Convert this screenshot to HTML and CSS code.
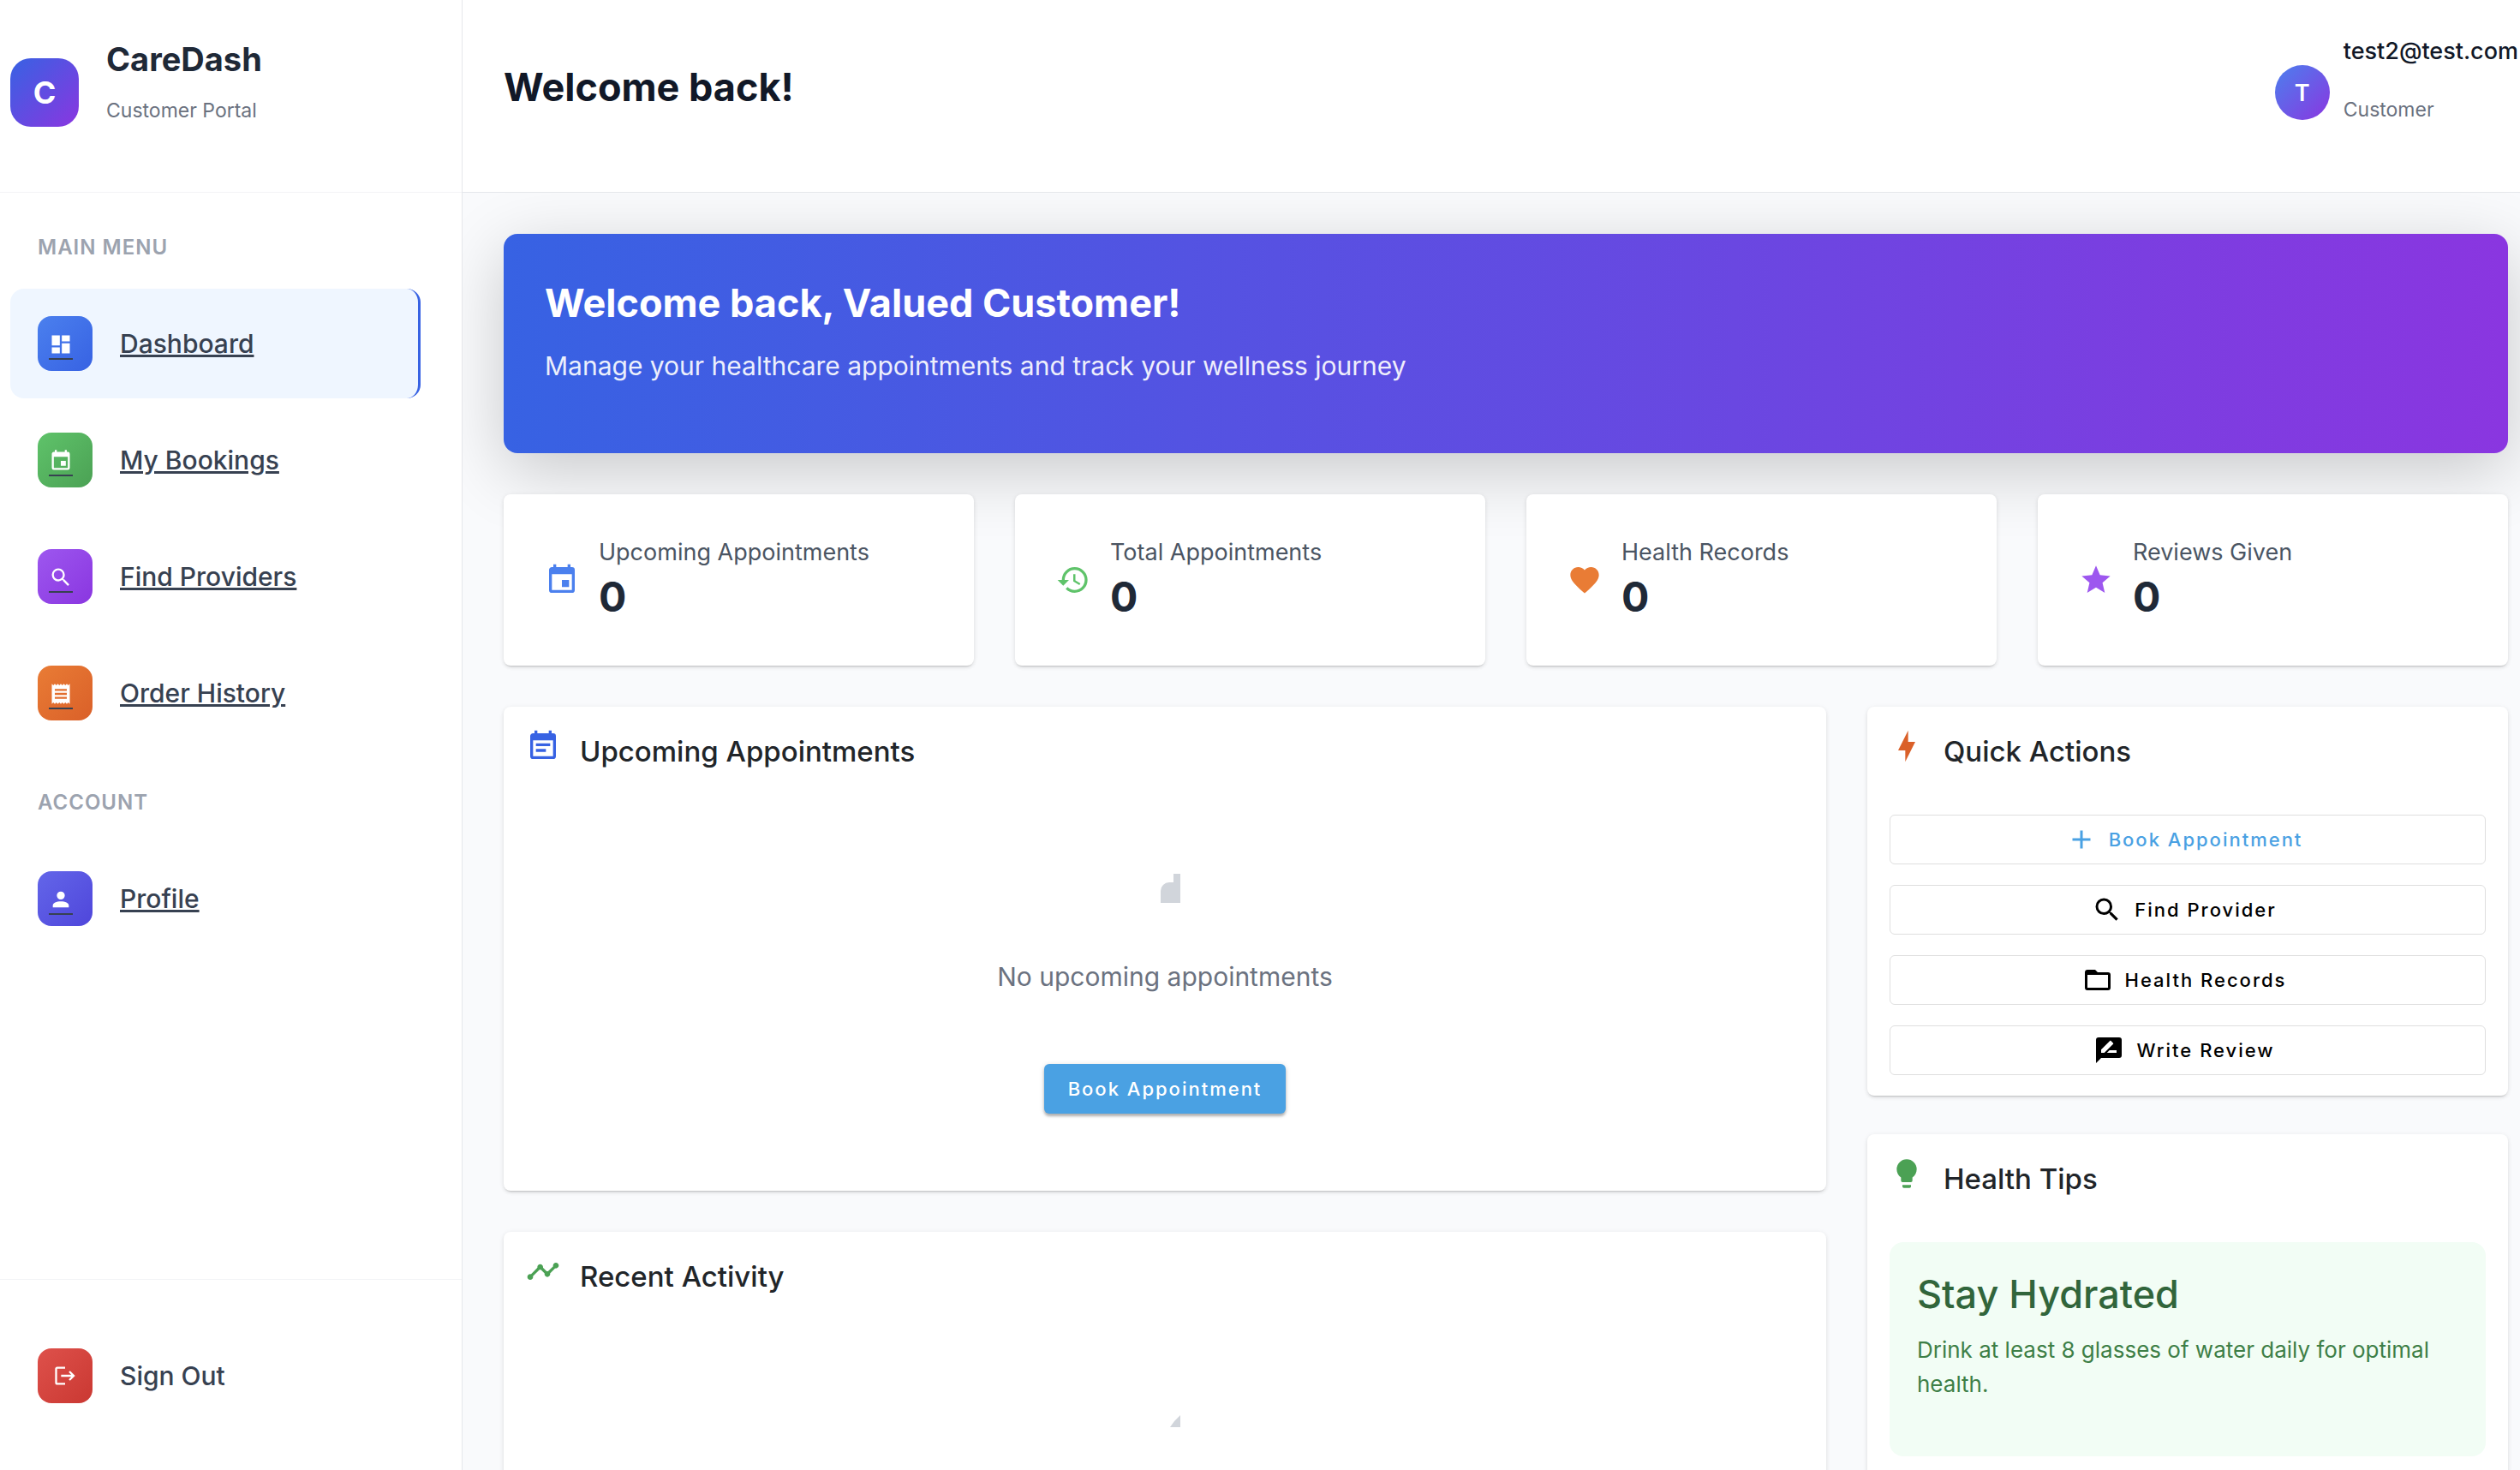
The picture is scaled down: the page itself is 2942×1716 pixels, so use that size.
FILE: index.html
```html
<!DOCTYPE html>
<html lang="en">
<head>
<meta charset="utf-8">
<title>CareDash</title>
<meta name="viewport" content="width=device-width, initial-scale=1">
<link rel="stylesheet" href="styles.css">
</head>
<body>
<div class="app">
  <aside class="sidebar">
    <div class="brand">
      <div class="brand-logo">C</div>
      <div>
        <div class="brand-name">CareDash</div>
        <div class="brand-sub">Customer Portal</div>
      </div>
    </div>
    <nav class="nav">
      <h2 class="nav-title">Main Menu</h2>
      <a class="nav-item active" href="#dashboard">
        <span class="tile blue"><svg class="tile-icon" viewBox="0 0 24 24"><path d="M13 3v6h8V3m-8 18h8V11h-8M3 21h8v-6H3m0-2h8V3H3v10Z"/></svg></span>
        <span class="nav-label">Dashboard</span>
      </a>
      <a class="nav-item" href="#bookings">
        <span class="tile green"><svg class="tile-icon" viewBox="0 0 24 24"><path d="M19 19H5V8h14m-3-7v2H8V1H6v2H5c-1.11 0-2 .89-2 2v14a2 2 0 0 0 2 2h14a2 2 0 0 0 2-2V5a2 2 0 0 0-2-2h-1V1m-1 11h-5v5h5v-5Z"/></svg></span>
        <span class="nav-label">My Bookings</span>
      </a>
      <a class="nav-item" href="#providers">
        <span class="tile purple"><svg class="tile-icon" viewBox="0 0 24 24"><path d="M9.500 3A6.500 6.500 0 0 1 16 9.500c0 1.610-.59 3.090-1.560 4.230l.27.270h.79l5 5-1.500 1.500-5-5v-.79l-.27-.27A6.516 6.516 0 0 1 9.500 16 6.500 6.500 0 0 1 3 9.500 6.500 6.500 0 0 1 9.500 3m0 2C7 5 5 7 5 9.500S7 14 9.500 14 14 12 14 9.500 12 5 9.500 5Z"/></svg></span>
        <span class="nav-label">Find Providers</span>
      </a>
      <a class="nav-item" href="#orders">
        <span class="tile orange"><svg class="tile-icon" viewBox="0 0 24 24"><path d="M3 22l1.500-1.500L6 22l1.500-1.500L9 22l1.500-1.500L12 22l1.500-1.500L15 22l1.500-1.500L18 22l1.500-1.500L21 22V2l-1.500 1.500L18 2l-1.500 1.500L15 2l-1.500 1.500L12 2l-1.500 1.500L9 2 7.500 3.500 6 2 4.500 3.500 3 2M18 9H6V7h12m0 6H6v-2h12m0 6H6v-2h12v2Z"/></svg></span>
        <span class="nav-label">Order History</span>
      </a>
      <h2 class="nav-title">Account</h2>
      <a class="nav-item" href="#profile">
        <span class="tile indigo"><svg class="tile-icon" viewBox="0 0 24 24"><path d="M12 4a4 4 0 0 1 4 4 4 4 0 0 1-4 4 4 4 0 0 1-4-4 4 4 0 0 1 4-4m0 10c4.420 0 8 1.790 8 4v2H4v-2c0-2.210 3.580-4 8-4Z"/></svg></span>
        <span class="nav-label">Profile</span>
      </a>
    </nav>
    <div class="sidebar-footer">
      <button class="nav-item sign-out" type="button">
        <span class="tile red"><svg class="tile-icon" viewBox="0 0 24 24"><path d="M17 7l-1.410 1.410L18.170 11H8v2h10.170l-2.580 2.580L17 17l5-5M4 5h8V3H4c-1.100 0-2 .9-2 2v14c0 1.100.9 2 2 2h8v-2H4V5Z"/></svg></span>
        <span class="nav-label">Sign Out</span>
      </button>
    </div>
  </aside>

  <div class="page">
    <header class="topbar">
      <h1 class="topbar-title">Welcome back!</h1>
      <div class="user">
        <div class="avatar">T</div>
        <div>
          <div class="user-mail">test2@test.com</div>
          <div class="user-role">Customer</div>
        </div>
      </div>
    </header>

    <main class="content">
      <section class="banner">
        <h2 class="banner-title">Welcome back, Valued Customer!</h2>
        <p class="banner-text">Manage your healthcare appointments and track your wellness journey</p>
      </section>

      <section class="stats">
        <article class="card stat">
          <svg class="icon c-blue" viewBox="0 0 24 24"><path d="M19 19H5V8h14m-3-7v2H8V1H6v2H5c-1.110 0-2 .89-2 2v14a2 2 0 0 0 2 2h14a2 2 0 0 0 2-2V5a2 2 0 0 0-2-2h-1V1m-1 11h-5v5h5v-5Z"/></svg>
          <div><div class="stat-label">Upcoming Appointments</div><div class="stat-value">0</div></div>
        </article>
        <article class="card stat">
          <svg class="icon c-green" viewBox="0 0 24 24"><path d="M13.500 8H12v5l4.280 2.540.72-1.210-3.500-2.080V8M13 3a9 9 0 0 0-9 9H1l3.960 4.030L9 12H6a7 7 0 0 1 7-7 7 7 0 0 1 7 7 7 7 0 0 1-7 7c-1.930 0-3.680-.79-4.940-2.060l-1.420 1.420A8.896 8.896 0 0 0 13 21a9 9 0 0 0 9-9 9 9 0 0 0-9-9"/></svg>
          <div><div class="stat-label">Total Appointments</div><div class="stat-value">0</div></div>
        </article>
        <article class="card stat">
          <svg class="icon c-orange" viewBox="0 0 24 24"><path d="M12 21.350l-1.450-1.320C5.400 15.360 2 12.270 2 8.500 2 5.410 4.420 3 7.500 3c1.740 0 3.410.81 4.500 2.080C13.090 3.810 14.760 3 16.500 3 19.580 3 22 5.410 22 8.500c0 3.770-3.400 6.860-8.550 11.530L12 21.350Z"/></svg>
          <div><div class="stat-label">Health Records</div><div class="stat-value">0</div></div>
        </article>
        <article class="card stat">
          <svg class="icon c-purple" viewBox="0 0 24 24"><path d="M12 17.270L18.180 21l-1.640-7.030L22 9.240l-7.190-.62L12 2 9.190 8.620 2 9.240l5.450 4.730L5.820 21 12 17.270Z"/></svg>
          <div><div class="stat-label">Reviews Given</div><div class="stat-value">0</div></div>
        </article>
      </section>

      <div class="columns">
        <div class="col-main">
          <section class="card panel">
            <div class="panel-head">
              <svg class="icon c-royal" viewBox="0 0 24 24"><path d="M14 14H7v2h7m5 3H5V8h14m0-5h-1V1h-2v2H8V1H6v2H5c-1.110 0-2 .9-2 2v14a2 2 0 0 0 2 2h14a2 2 0 0 0 2-2V5a2 2 0 0 0-2-2m-2 7H7v2h10v-2Z"/></svg>
              <h3 class="panel-title">Upcoming Appointments</h3>
            </div>
            <div class="empty">
              <svg class="empty-icon" viewBox="0 0 36 36"><path d="M13 36V22a10 10 0 0 1 10-10h5V2h8v34z"/></svg>
              <p class="empty-text">No upcoming appointments</p>
              <button class="btn-primary" type="button">Book Appointment</button>
            </div>
          </section>
          <section class="card panel">
            <div class="panel-head">
              <svg class="icon c-leaf" viewBox="0 0 24 24"><path d="M23 8c0 1.100-.9 2-2 2a1.700 1.700 0 0 1-.51-.07l-3.560 3.550c.05.16.07.34.07.52 0 1.100-.9 2-2 2s-2-.9-2-2c0-.18.02-.36.07-.52l-2.550-2.550c-.16.05-.34.07-.52.07s-.36-.02-.52-.07l-4.550 4.560c.05.16.07.33.07.51 0 1.100-.9 2-2 2s-2-.9-2-2 .9-2 2-2c.18 0 .35.02.51.07l4.560-4.550C8.020 9.360 8 9.180 8 9c0-1.100.9-2 2-2s2 .9 2 2c0 .18-.02.36-.07.52l2.550 2.550c.16-.05.34-.07.52-.07s.36.02.52.07l3.550-3.560A1.700 1.700 0 0 1 19 8c0-1.100.9-2 2-2s2 .9 2 2Z"/></svg>
              <h3 class="panel-title">Recent Activity</h3>
            </div>
            <div class="empty">
              <svg class="empty-icon" viewBox="0 0 36 36"><path d="M24 35Q29 27 36 21v14z"/></svg>
            </div>
          </section>
        </div>

        <div class="col-side">
          <section class="card panel">
            <div class="panel-head">
              <svg class="icon c-rust" viewBox="0 0 24 24"><path d="M11 15H6l7-14v8h5l-7 14v-8Z"/></svg>
              <h3 class="panel-title">Quick Actions</h3>
            </div>
            <div class="actions">
              <button class="btn-outline accent" type="button"><svg class="btn-icon" viewBox="0 0 24 24"><path d="M19 13h-6v6h-2v-6H5v-2h6V5h2v6h6v2Z"/></svg>Book Appointment</button>
              <button class="btn-outline" type="button"><svg class="btn-icon" viewBox="0 0 24 24"><path d="M9.500 3A6.500 6.500 0 0 1 16 9.500c0 1.610-.59 3.090-1.560 4.230l.27.270h.79l5 5-1.500 1.500-5-5v-.79l-.27-.27A6.516 6.516 0 0 1 9.500 16 6.500 6.500 0 0 1 3 9.500 6.500 6.500 0 0 1 9.500 3m0 2C7 5 5 7 5 9.500S7 14 9.500 14 14 12 14 9.500 12 5 9.500 5Z"/></svg>Find Provider</button>
              <button class="btn-outline" type="button"><svg class="btn-icon" viewBox="0 0 24 24"><path d="M20 18H4V8h16m0-2h-8l-2-2H4c-1.110 0-2 .89-2 2v12a2 2 0 0 0 2 2h16a2 2 0 0 0 2-2V8a2 2 0 0 0-2-2Z"/></svg>Health Records</button>
              <button class="btn-outline" type="button"><svg class="btn-icon" viewBox="0 0 24 24"><path d="M20 2H4a2 2 0 0 0-2 2v18l4-4h14a2 2 0 0 0 2-2V4a2 2 0 0 0-2-2M6 14v-2.470l6.880-6.880c.2-.2.510-.2.710 0l1.770 1.770c.2.200.2.510 0 .71L8.470 14H6m12 0h-7.500l2-2H18v2Z"/></svg>Write Review</button>
            </div>
          </section>
          <section class="card panel">
            <div class="panel-head">
              <svg class="icon c-leaf" viewBox="0 0 24 24"><path d="M12 2a7 7 0 0 0-7 7c0 2.380 1.190 4.470 3 5.740V17a1 1 0 0 0 1 1h6a1 1 0 0 0 1-1v-2.260c1.810-1.270 3-3.360 3-5.740a7 7 0 0 0-7-7M9 21a1 1 0 0 0 1 1h4a1 1 0 0 0 1-1v-1H9v1Z"/></svg>
              <h3 class="panel-title">Health Tips</h3>
            </div>
            <div class="tip">
              <h4 class="tip-title">Stay Hydrated</h4>
              <p class="tip-text">Drink at least 8 glasses of water daily for optimal health.</p>
            </div>
          </section>
        </div>
      </div>
    </main>
  </div>
</div>
</body>
</html>
```
FILE: styles.css
```css
* { box-sizing: border-box; }

body {
  margin: 0;
  font-family: Inter, "Liberation Sans", sans-serif;
  background: #f9fafc;
  color: #212529;
}

h1, h2, h3, h4, p { margin: 0; font-weight: inherit; }
svg { display: block; fill: currentColor; flex: none; }
button { font: inherit; color: inherit; cursor: pointer; }

.app { display: flex; height: 100vh; overflow: hidden; }

/* Sidebar */
.sidebar {
  position: relative;
  z-index: 1;
  display: flex;
  flex: none;
  flex-direction: column;
  width: 540px;
  background: #fff;
  border-right: 1px solid #e5e7eb;
}

.brand {
  display: flex;
  align-items: center;
  gap: 32px;
  padding: 40px 12px 48px;
  border-bottom: 1px solid #f3f4f6;
}
.brand-logo {
  display: grid;
  place-items: center;
  width: 80px;
  height: 80px;
  border-radius: 24px;
  background: linear-gradient(135deg, #3762e3, #8a36e0);
  color: #fff;
  font-size: 36px;
  font-weight: 700;
}
.brand-name { font-size: 38px; line-height: 58px; font-weight: 700; color: #1f2937; margin-bottom: 12px; }
.brand-sub { font-size: 23px; line-height: 38px; margin-bottom: 28px; color: #6b7280; }

.nav { flex: 1; display: flex; flex-direction: column; gap: 8px; padding: 8px 48px 0 12px; }
.nav-title {
  padding: 36px 32px 20px;
  font-size: 24px;
  line-height: 40px;
  font-weight: 600;
  letter-spacing: 1px;
  text-transform: uppercase;
  color: #9ca3af;
}
.nav-item {
  display: flex;
  align-items: center;
  gap: 32px;
  padding: 32px;
  border: 0;
  border-radius: 16px;
  background: none;
  color: #374151;
  text-align: left;
  text-decoration: none;
}
.nav-item.active { background: #eff6ff; border-right: 3px solid #3762e3; }
.nav-label {
  font-size: 30px;
  line-height: 48px;
  font-weight: 500;
  text-decoration: underline;
  text-decoration-thickness: 3px;
}

.tile {
  display: flex;
  align-items: center;
  justify-content: center;
  width: 64px;
  height: 64px;
  padding: 6px 10px 0 0;
  border-radius: 16px;
  color: #fff;
}
.tile-icon { width: 28px; height: 32px; padding-bottom: 2px; border-bottom: 2px solid #374151; }
.sign-out .tile { padding: 0; }
.sign-out .tile-icon { height: 28px; padding: 0; border: 0; }
.sign-out .nav-label { text-decoration: none; }
.blue { background: linear-gradient(135deg, #4b80ee, #3762e3); }
.green { background: linear-gradient(135deg, #5fc36a, #4ba154); }
.purple { background: linear-gradient(135deg, #9d57ef, #8a36e0); }
.orange { background: linear-gradient(135deg, #e97c35, #da6029); }
.indigo { background: linear-gradient(135deg, #6366e9, #4f46db); }
.red { background: linear-gradient(135deg, #de514b, #ca3832); }

.sidebar-footer { padding: 48px 48px 46px 12px; border-top: 1px solid #f3f4f6; }
.sign-out { width: 100%; }

/* Top bar */
.page { flex: 1; min-width: 0; }
.topbar {
  position: relative;
  z-index: 1;
  display: flex;
  justify-content: space-between;
  height: 225px;
  padding: 0 2px 0 48px;
  background: #fff;
  border-bottom: 1px solid #e5e7eb;
}
.topbar-title { padding-top: 72px; font-size: 45px; line-height: 60px; font-weight: 700; color: #111827; }
.user { display: flex; gap: 16px; padding-top: 40px; }
.avatar {
  display: grid;
  place-items: center;
  width: 64px;
  height: 64px;
  margin-top: 36px;
  border-radius: 50%;
  background: linear-gradient(135deg, #4b80ee, #8a36e0);
  color: #fff;
  font-size: 27px;
  font-weight: 600;
}
.user-mail { font-size: 27px; line-height: 40px; font-weight: 500; color: #111827; margin-bottom: 28px; }
.user-role { font-size: 23px; line-height: 40px; color: #6b7280; }

/* Content */
.content { display: flex; flex-direction: column; gap: 48px; padding: 48px 14px 48px 48px; }

.banner {
  height: 256px;
  padding: 48px;
  border-radius: 16px;
  background: linear-gradient(90deg, #3762e3, #8a36e0);
  box-shadow: 0 20px 80px rgba(0, 0, 0, .2);
  color: #fff;
}
.banner-title { font-size: 45px; line-height: 66px; font-weight: 700; margin-bottom: 16px; }
.banner-text { font-size: 30px; line-height: 48px; opacity: .9; }

.card {
  position: relative;
  border-radius: 8px;
  background: #fff;
  box-shadow: 0 3px 2px -2px rgba(0, 0, 0, .15), 0 2px 4px rgba(0, 0, 0, .08), 0 1px 6px rgba(0, 0, 0, .06);
}
.icon { width: 40px; height: 40px; }

.stats { display: grid; grid-template-columns: repeat(4, 1fr); gap: 48px; }
.stat { display: flex; align-items: center; gap: 23px; padding: 48px; }
.stat-label { font-size: 27px; line-height: 40px; color: #4b5563; }
.stat-value { font-size: 48px; line-height: 64px; font-weight: 700; color: #1f2937; }

.columns { display: grid; grid-template-columns: repeat(3, 1fr); gap: 48px; align-items: start; }
.col-main { grid-column: span 2; display: grid; gap: 48px; }
.col-side { display: grid; gap: 45px; }

.panel { padding: 26px 26px 24px; }
.panel-head { display: flex; gap: 23px; margin-bottom: 48px; }
.panel-title { font-size: 33px; line-height: 52px; font-weight: 500; }

.empty { display: flex; flex-direction: column; align-items: center; min-height: 415px; padding-top: 67px; }
.empty-icon { width: 36px; height: 36px; color: #d1d5db; margin-bottom: 64px; }
.empty-text { font-size: 30px; line-height: 44px; color: #6b7280; margin-bottom: 80px; }

.btn-primary,
.btn-outline {
  height: 58px;
  border-radius: 6px;
  font-size: 22px;
  font-weight: 500;
  letter-spacing: 2px;
}
.btn-primary {
  padding: 0 28px;
  border: 0;
  background: #4aa1e3;
  box-shadow: 0 3px 3px rgba(0, 0, 0, .25), 0 1px 6px rgba(0, 0, 0, .15);
  color: #fff;
}

.actions { display: grid; gap: 24px; }
.btn-outline {
  display: flex;
  align-items: center;
  justify-content: center;
  gap: 14px;
  padding: 0 8px 0 0;
  border: 1px solid #dfdfdf;
  background: #fff;
  color: #000;
}
.btn-outline.accent { color: #4aa1e3; }
.btn-icon { width: 36px; height: 36px; }

.tip { padding: 32px 32px 64px; border-radius: 16px; background: #f2fdf5; }
.tip-title { font-size: 45px; line-height: 58px; font-weight: 500; color: #31653b; margin-bottom: 16px; }
.tip-text { font-size: 26px; line-height: 40px; color: #3e7f47; }

.c-blue { color: #4b80ee; }
.c-royal { color: #3762e3; }
.c-green { color: #5fc36a; }
.c-leaf { color: #4ba154; }
.c-orange { color: #e97c35; }
.c-rust { color: #da6029; }
.c-purple { color: #9d57ef; }
```
